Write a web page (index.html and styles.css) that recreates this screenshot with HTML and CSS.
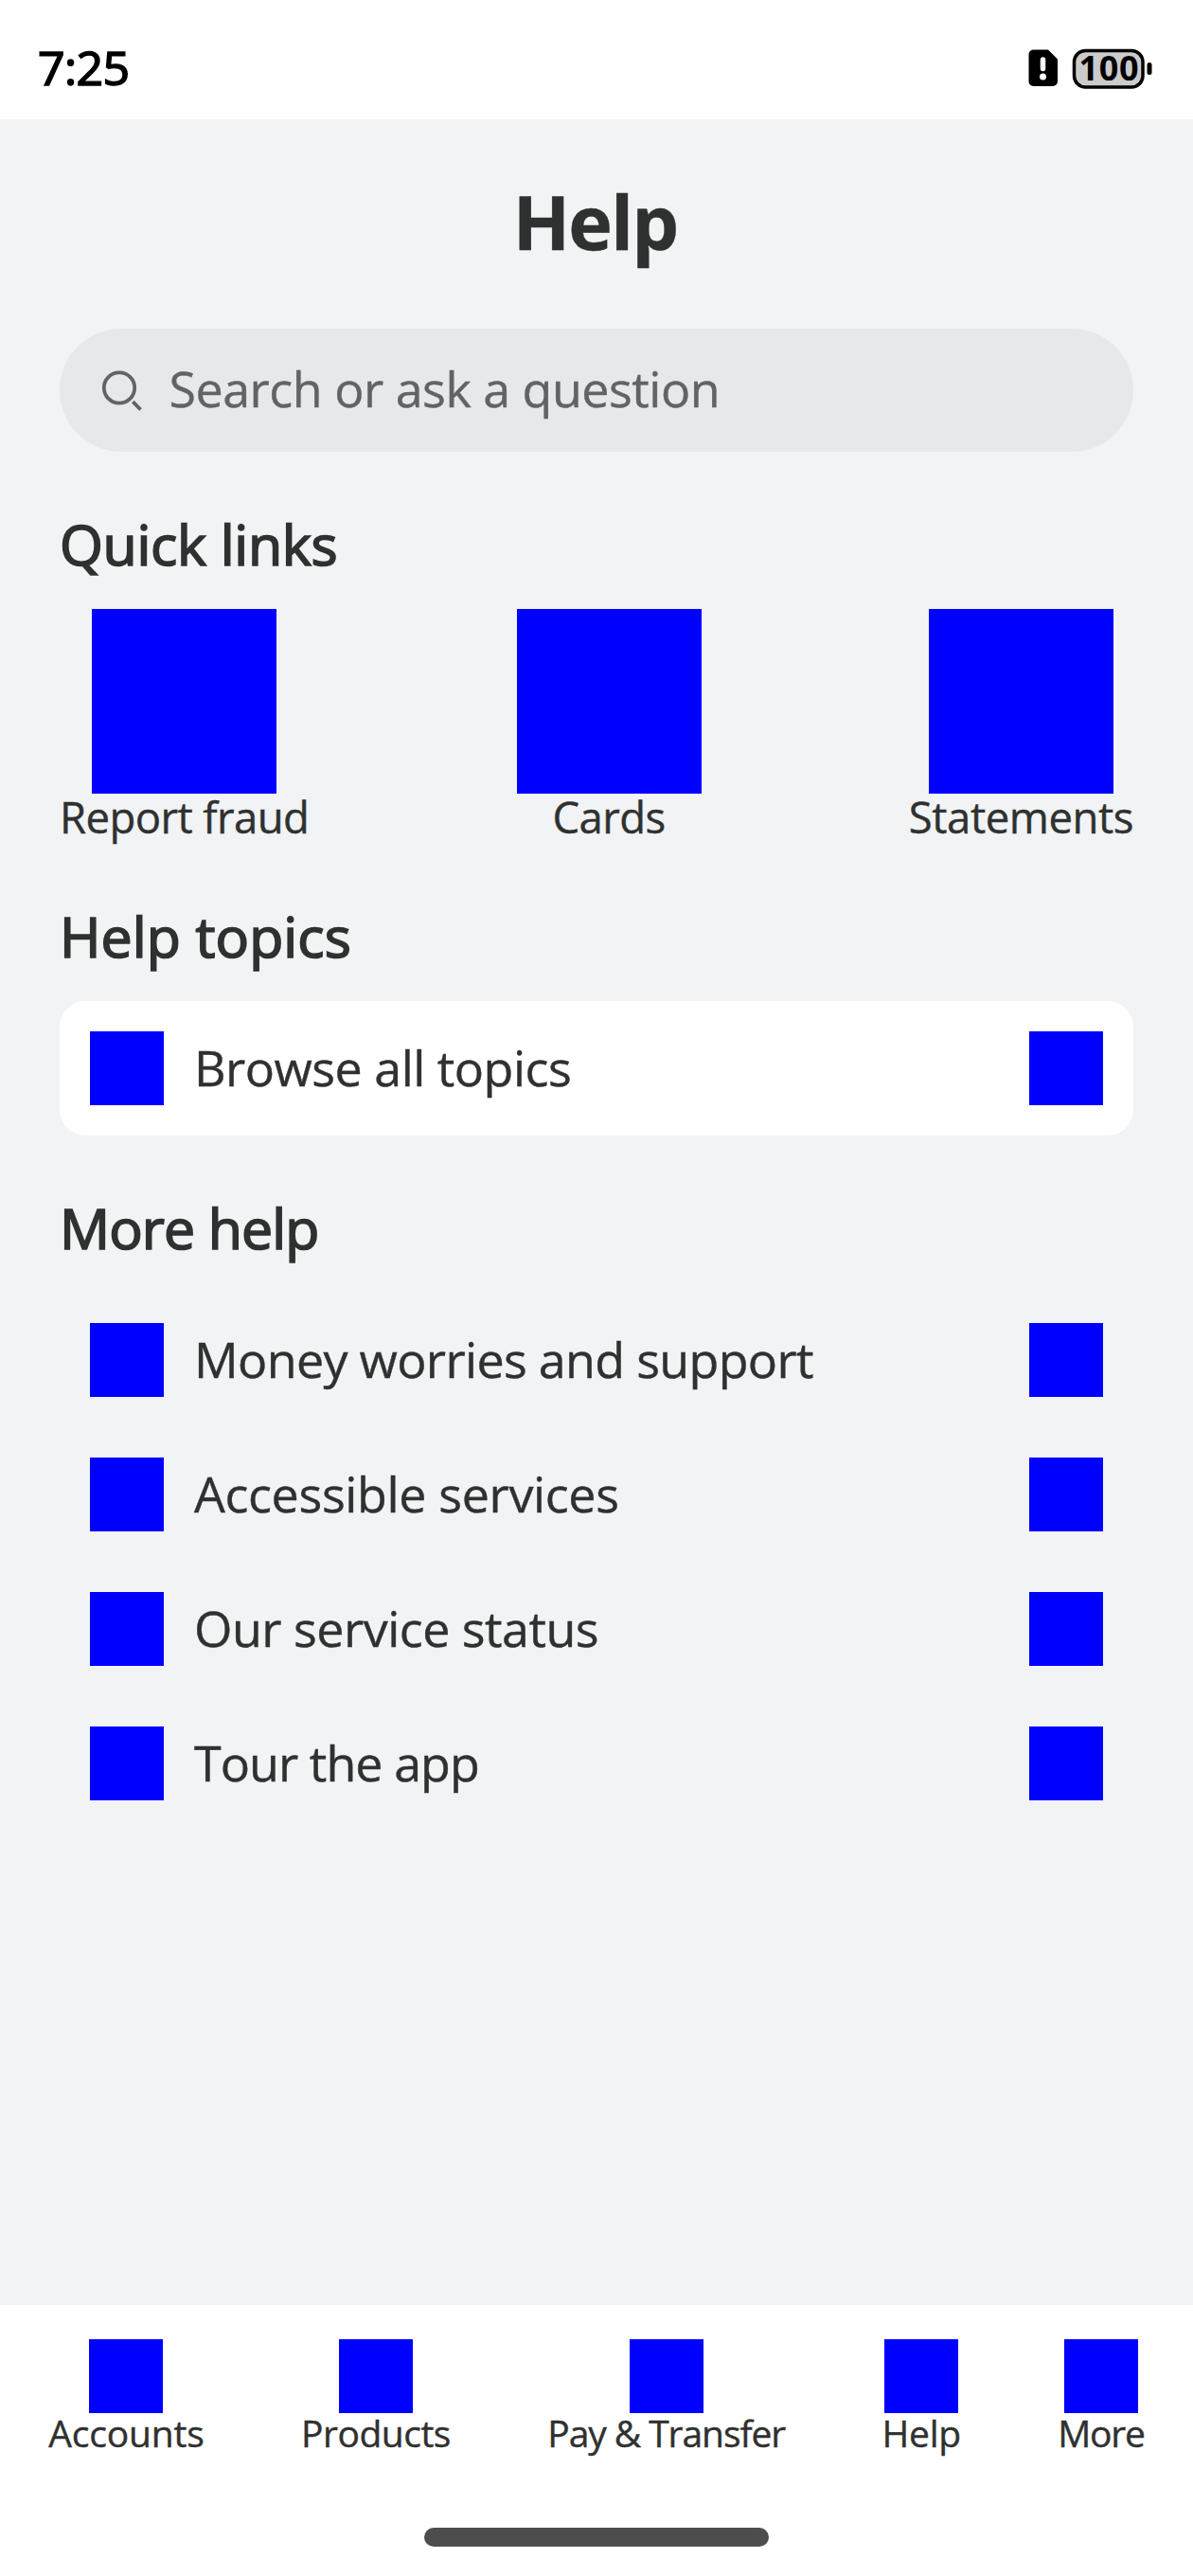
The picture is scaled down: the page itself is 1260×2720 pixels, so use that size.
FILE: index.html
```html
<!DOCTYPE html>
<html lang="en">
<head>
<meta charset="utf-8">
<title>Help</title>
<link rel="stylesheet" href="styles.css">
</head>
<body>
<div class="screen">
  <header class="status-bar">
    <span class="clock">7:25</span>
    <svg class="status-icons" width="132" height="44" viewBox="0 0 132 44" aria-label="Battery 100">
      <path d="M6.5 1.5H22L32 11.500V35a5 5 0 0 1-5 5H6.500a5 5 0 0 1-5-5V6.500a5 5 0 0 1 5-5Z"/>
      <path d="M16.500 12v9.500" stroke="#fff" stroke-width="5.500" stroke-linecap="round"/>
      <circle cx="16.500" cy="30" r="3.500" fill="#fff"/>
      <rect x="49.500" y="2.500" width="72.500" height="38.500" rx="12" fill="#cbcbcb" stroke="#000" stroke-width="3.500"/>
      <rect x="126.500" y="15" width="5" height="13" rx="2.500"/>
      <text class="battery-level" x="54.500" y="34" textLength="63">100</text>
    </svg>
  </header>

  <main class="content">
    <h1 class="title">Help</h1>

    <div class="search">
      <svg width="44" height="44" viewBox="0 0 44 44" fill="none" stroke="#616464" stroke-width="3.800">
        <circle cx="19" cy="19.500" r="16.200"/>
        <path d="M33.300 34.200 41.500 42.500"/>
      </svg>
      <span class="search-text">Search or ask a question</span>
    </div>

    <h2 class="heading heading-quick">Quick links</h2>
    <div class="quick-links">
      <div class="quick-item"><i class="tile"></i><span class="quick-label">Report fraud</span></div>
      <div class="quick-item"><i class="tile"></i><span class="quick-label">Cards</span></div>
      <div class="quick-item"><i class="tile"></i><span class="quick-label statements">Statements</span></div>
    </div>

    <h2 class="heading heading-topics">Help topics</h2>
    <div class="row card"><i class="icon"></i><span class="row-label">Browse all topics</span><i class="icon"></i></div>

    <h2 class="heading heading-more">More help</h2>
    <div class="list">
      <div class="row"><i class="icon"></i><span class="row-label money">Money worries and support</span><i class="icon"></i></div>
      <div class="row"><i class="icon"></i><span class="row-label services">Accessible services</span><i class="icon"></i></div>
      <div class="row"><i class="icon"></i><span class="row-label">Our service status</span><i class="icon"></i></div>
      <div class="row"><i class="icon"></i><span class="row-label tour">Tour the app</span><i class="icon"></i></div>
    </div>
  </main>

  <footer class="footer">
    <nav class="tabs">
      <div class="tab"><i class="icon"></i><span class="tab-label accounts">Accounts</span></div>
      <div class="tab"><i class="icon"></i><span class="tab-label">Products</span></div>
      <div class="tab"><i class="icon"></i><span class="tab-label transfer">Pay &amp; Transfer</span></div>
      <div class="tab"><i class="icon"></i><span class="tab-label help">Help</span></div>
      <div class="tab"><i class="icon"></i><span class="tab-label more">More</span></div>
    </nav>
    <div class="home-indicator"></div>
  </footer>
</div>
</body>
</html>
```
FILE: styles.css
```css
* { box-sizing: border-box; }

body {
  margin: 0;
  font-family: "Open Sans", "Noto Sans", sans-serif;
  color: #2f3130;
  background: #f1f3f5;
  -webkit-text-stroke: 0.4px currentColor;
}

.screen {
  display: flex;
  flex-direction: column;
  width: 1260px;
  height: 2720px;
}

.status-bar {
  display: flex;
  justify-content: space-between;
  align-items: flex-start;
  height: 126px;
  padding: 41px 43px 0 40px;
  background: #fff;
  color: #000;
}
.clock {
  font-size: 50px;
  line-height: 60px;
  letter-spacing: -0.6px;
  -webkit-text-stroke-width: 1.6px;
}
.status-icons {
  margin-top: 10px;
  overflow: visible;
  -webkit-text-stroke-width: 0;
}
.battery-level { font: 700 36px "Open Sans", sans-serif; }

.content {
  flex: 1;
  padding: 58px 63px 0;
}

.title {
  margin: 0;
  padding-right: 3px;
  font-size: 79px;
  font-weight: 700;
  line-height: 100px;
  letter-spacing: -1.9px;
  text-align: center;
}

.search {
  display: flex;
  align-items: center;
  gap: 27.5px;
  height: 130px;
  margin-top: 63px;
  padding-left: 44px;
  border-radius: 65px;
  background: #e6e8ea;
  color: #616464;
}
.search-text {
  padding-bottom: 4px;
  font-size: 52px;
  line-height: 66px;
  letter-spacing: -0.5px;
}

.heading {
  margin: 0 0 31px;
  font-size: 59px;
  font-weight: 400;
  line-height: 76px;
  -webkit-text-stroke-width: 1.7px;
}
.heading-quick { margin-top: 59px; letter-spacing: -0.3px; }
.heading-topics { margin-top: 64px; letter-spacing: 0.1px; }
.heading-more { margin-top: 59px; letter-spacing: -0.9px; }

.quick-links {
  display: flex;
  justify-content: space-between;
}
.quick-item {
  display: flex;
  flex-direction: column;
  align-items: center;
}
.tile {
  width: 195px;
  height: 195px;
  background: #00f;
}
.quick-label {
  font-size: 45.5px;
  line-height: 48px;
  letter-spacing: -0.6px;
}
.statements { letter-spacing: -0.45px; }

.row {
  display: flex;
  align-items: center;
  gap: 32px;
  height: 142px;
  padding: 0 32px;
}
.card {
  border-radius: 27px;
  background: #fff;
}
.icon {
  flex: none;
  width: 78px;
  height: 78px;
  background: #00f;
}
.row-label {
  flex: 1;
  padding-bottom: 3px;
  font-size: 52px;
  line-height: 66px;
  letter-spacing: -0.52px;
}
.money { letter-spacing: -0.68px; }
.services { letter-spacing: -0.36px; }
.tour { letter-spacing: -0.95px; }

.footer {
  height: 286px;
  padding-top: 36px;
  background: #fff;
}
.tabs {
  display: flex;
  justify-content: space-around;
}
.tab {
  display: flex;
  flex-direction: column;
  align-items: center;
}
.tab-label {
  font-size: 39px;
  line-height: 42px;
  letter-spacing: -0.5px;
}
.accounts { letter-spacing: -0.17px; }
.transfer { letter-spacing: -1.07px; }
.help { letter-spacing: -0.3px; }
.more { letter-spacing: -1.2px; }

.home-indicator {
  width: 364px;
  height: 20px;
  margin: 79px auto 0;
  border-radius: 10px;
  background: #4d4d4d;
}
```
